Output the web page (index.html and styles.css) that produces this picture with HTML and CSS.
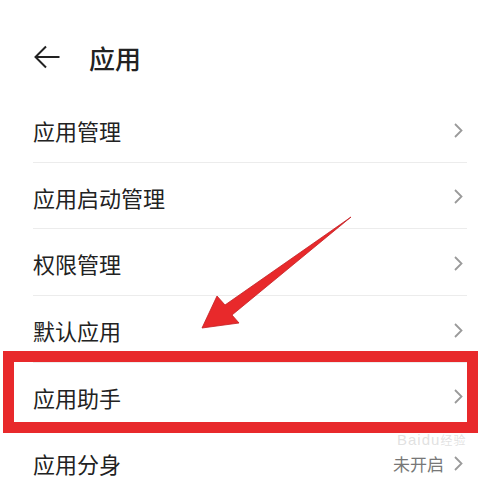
FILE: index.html
```html
<!DOCTYPE html>
<html lang="zh-CN">
<head>
    <meta charset="UTF-8">
    <meta name="viewport" content="width=device-width, initial-scale=1.0">
    <title>应用</title>
    <link rel="stylesheet" href="styles.css">
</head>
<body>
    <header class="topbar">
        <svg class="back" width="26" height="24" viewBox="0 0 26 24">
            <path d="M12 1.5 L1.5 12 L12 22.5 M1.5 12 H25.5" fill="none" stroke="#222" stroke-width="2"/>
        </svg>
        <h1 class="title">应用</h1>
    </header>

    <ul class="menu">
        <li class="row"><span>应用管理</span><span class="side"><svg class="chev" viewBox="0 0 9 15"><path d="M1 1 L7.5 7.5 L1 14" fill="none" stroke="#9a9a9a" stroke-width="1.8"/></svg></span></li>
        <li class="row"><span>应用启动管理</span><span class="side"><svg class="chev" viewBox="0 0 9 15"><path d="M1 1 L7.5 7.5 L1 14" fill="none" stroke="#9a9a9a" stroke-width="1.8"/></svg></span></li>
        <li class="row"><span>权限管理</span><span class="side"><svg class="chev" viewBox="0 0 9 15"><path d="M1 1 L7.5 7.5 L1 14" fill="none" stroke="#9a9a9a" stroke-width="1.8"/></svg></span></li>
        <li class="row"><span>默认应用</span><span class="side"><svg class="chev" viewBox="0 0 9 15"><path d="M1 1 L7.5 7.5 L1 14" fill="none" stroke="#9a9a9a" stroke-width="1.8"/></svg></span></li>
        <li class="row marked"><span>应用助手</span><span class="side"><svg class="chev" viewBox="0 0 9 15"><path d="M1 1 L7.5 7.5 L1 14" fill="none" stroke="#9a9a9a" stroke-width="1.8"/></svg></span></li>
        <li class="row"><span>应用分身</span><span class="side"><span class="state">未开启</span><svg class="chev" viewBox="0 0 9 15"><path d="M1 1 L7.5 7.5 L1 14" fill="none" stroke="#9a9a9a" stroke-width="1.8"/></svg></span></li>
    </ul>

    <!-- annotation arrow drawn over the list -->
    <svg class="pointer" width="500" height="483" viewBox="0 0 500 483">
        <polygon points="202,328 217,296 225,305 351,217 232,315 239,323" fill="#e8292b" stroke="#c41e22" stroke-width="0.8" stroke-linejoin="round"/>
    </svg>

    <div class="watermark">Baidu<span class="jy">经验</span></div>
</body>
</html>
```

FILE: styles.css
```css
body {
    margin: 0;
    background-color: #ffffff;
    font-family: "Noto Sans CJK SC", "Noto Sans", sans-serif;
    color: #222222;
    position: relative;
    height: 483px;
    overflow: hidden;
}
.topbar {
    display: flex;
    align-items: center;
    height: 96px;
    padding: 20px 0 0 34px;
    box-sizing: border-box;
}
.back {
    display: block;
    margin-top: -2px;
}
.title {
    margin: 0 0 0 29px;
    font-size: 26px;
    font-weight: 500;
    line-height: 26px;
}
.menu {
    list-style: none;
    margin: 0;
    padding: 0 33px;
}
.row {
    display: flex;
    justify-content: space-between;
    align-items: flex-start;
    height: 66.7px;
    box-sizing: border-box;
    padding-top: 23px;
    border-bottom: 1px solid #ececec;
    font-size: 22px;
    line-height: 22px;
}
.side {
    display: flex;
    align-items: center;
    height: 22px;
    padding-right: 4px;
}
.chev {
    width: 9px;
    height: 15px;
    display: block;
}
.state {
    font-size: 17px;
    line-height: 17px;
    color: #777777;
    margin-right: 10px;
}
.marked {
    position: relative;
}
.marked::after {
    content: "";
    position: absolute;
    top: -12px;
    left: -30px;
    right: -11px;
    bottom: -5px;
    border: 11px solid #e8292b;
}
.pointer {
    position: absolute;
    top: 0;
    left: 0;
    pointer-events: none;
}
.watermark {
    position: absolute;
    left: 397px;
    top: 433px;
    font-family: "Liberation Sans", sans-serif;
    font-size: 15px;
    line-height: 14px;
    color: rgba(200, 200, 200, 0.55);
    letter-spacing: 1px;
}
.jy {
    font-family: "Noto Sans CJK SC", sans-serif;
    font-size: 12px;
}
```
